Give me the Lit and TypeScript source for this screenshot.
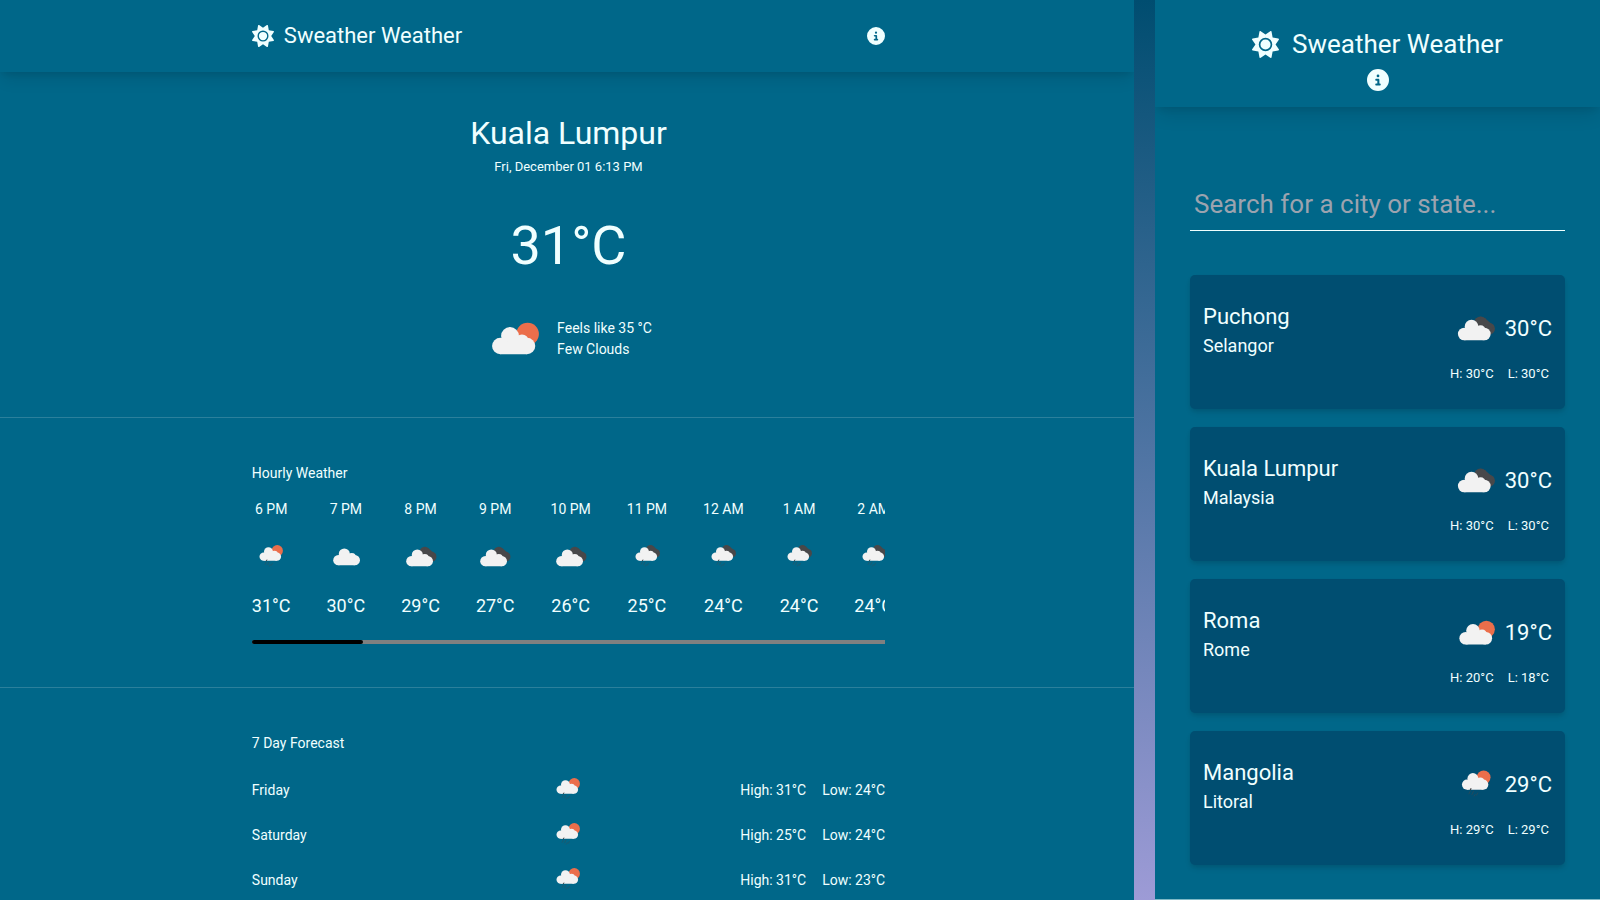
import { LitElement, html, svg, css } from "lit";
import { customElement, property } from "lit/decorators.js";

type Sky = "few" | "cloud" | "broken" | "rain-day" | "rain-night";

interface Hour { time: string; sky: Sky; temp: number }
interface Day { name: string; high: number; low: number }
interface Place { city: string; region: string; sky: Sky; temp: number; high: number; low: number }

const HOURS: Hour[] = [
  { time: "6 PM", sky: "rain-day", temp: 31 },
  { time: "7 PM", sky: "cloud", temp: 30 },
  { time: "8 PM", sky: "broken", temp: 29 },
  { time: "9 PM", sky: "broken", temp: 27 },
  { time: "10 PM", sky: "broken", temp: 26 },
  { time: "11 PM", sky: "rain-night", temp: 25 },
  { time: "12 AM", sky: "rain-night", temp: 24 },
  { time: "1 AM", sky: "rain-night", temp: 24 },
  { time: "2 AM", sky: "rain-night", temp: 24 },
];

const DAYS: Day[] = [
  { name: "Friday", high: 31, low: 24 },
  { name: "Saturday", high: 25, low: 24 },
  { name: "Sunday", high: 31, low: 23 },
];

const PLACES: Place[] = [
  { city: "Puchong", region: "Selangor", sky: "broken", temp: 30, high: 30, low: 30 },
  { city: "Kuala Lumpur", region: "Malaysia", sky: "broken", temp: 30, high: 30, low: 30 },
  { city: "Roma", region: "Rome", sky: "few", temp: 19, high: 20, low: 18 },
  { city: "Mangolia", region: "Litoral", sky: "rain-day", temp: 29, high: 29, low: 29 },
];

const SUN =
  "M361.5 1.2c5 2.1 8.6 6.6 9.6 11.9L391 121l107.9 19.8c5.3 1 9.8 4.6 11.9 9.6s1.5 10.7-1.6 15.2L446.9 256l62.3 90.3c3.1 4.5 3.7 10.2 1.6 15.2s-6.6 8.6-11.9 9.6L391 391 371.1 498.9c-1 5.3-4.6 9.8-9.6 11.9s-10.7 1.5-15.2-1.6L256 446.9l-90.3 62.3c-4.5 3.1-10.2 3.7-15.2 1.6s-8.6-6.6-9.6-11.9L121 391 13.1 371.1c-5.3-1-9.8-4.6-11.9-9.6s-1.5-10.7 1.6-15.2L65.1 256 2.8 165.7c-3.1-4.5-3.7-10.2-1.6-15.2s6.6-8.6 11.9-9.6L121 121 140.9 13.1c1-5.3 4.6-9.8 9.6-11.9s10.7-1.5 15.2 1.6L256 65.1 346.3 2.8c4.5-3.1 10.2-3.7 15.2-1.6zM160 256a96 96 0 1 1 192 0 96 96 0 1 1 -192 0zm224 0a128 128 0 1 0 -256 0 128 128 0 1 0 256 0z";

const INFO =
  "M256 512A256 256 0 1 0 256 0a256 256 0 1 0 0 512zM216 336l24 0 0-64-24 0c-13.3 0-24-10.7-24-24s10.7-24 24-24l48 0c13.3 0 24 10.7 24 24l0 88 8 0c13.3 0 24 10.7 24 24s-10.7 24-24 24l-80 0c-13.3 0-24-10.7-24-24s10.7-24 24-24zm40-208a32 32 0 1 1 0 64 32 32 0 1 1 0-64z";

@customElement("sky-icon")
export class SkyIcon extends LitElement {
  @property() sky: Sky = "cloud";

  static styles = css`
    :host { display: block; flex: none; }
    svg { display: block; width: 100%; height: 100%; }
    .cloud { fill: #f2f2f2; }
    .sun { fill: #eb6e4b; }
    .shade { fill: #48484a; }
    .drops { stroke: #48484a; stroke-width: 4; stroke-linecap: round; opacity: 0.6; }
    .notch { stroke: #48484a; stroke-width: 6; stroke-linecap: round; }
  `;

  private cloud() {
    return svg`<g class="cloud">
      <circle cx="54" cy="27" r="27"/><circle cx="25" cy="57" r="25"/>
      <circle cx="105" cy="57" r="25"/><circle cx="90" cy="42" r="20"/>
      <path d="M25 82 L25 52 L54 40 L90 40 L105 52 L105 82 Z"/>
    </g>`;
  }

  private behind() {
    if (this.sky === "few" || this.sky === "rain-day")
      return svg`<circle class="sun" cx="107" cy="21" r="34"/>`;
    if (this.sky === "broken" || this.sky === "rain-night")
      return svg`<g class="shade"><circle cx="90" cy="12" r="25"/>
        <circle cx="123" cy="36" r="24"/><path d="M90 -13 L108 -6 L144 26 L120 58 L80 30 Z"/></g>`;
    return svg``;
  }

  private place() {
    switch (this.sky) {
      case "cloud": return "translate(5.2 9.4) scale(0.206)";
      case "few": return "translate(4.4 10.6) scale(0.206)";
      case "broken": return "translate(3.2 10.4) scale(0.206)";
      default: return "translate(6.5 8.2) scale(0.166)";
    }
  }

  render() {
    const wet = this.sky === "rain-day" || this.sky === "rain-night";
    return html`<svg viewBox="0 0 36 36" aria-hidden="true">
      ${svg`<g transform=${this.place()}>
        ${this.behind()}${this.cloud()}
        ${wet
          ? svg`<path class="notch" d="M44 77 L42 82"/>
            <path class="drops" d="M40 91 L34 103 M57 90 L49 106 M65 106 L60 114 M78 98 L72 109"/>`
          : svg``}
      </g>`}
    </svg>`;
  }
}

const base = css`
  * { box-sizing: border-box; }
  h1, h2, h3, p, ul { margin: 0; padding: 0; font-weight: 400; }
  ul { list-style: none; }
  a { color: inherit; text-decoration: none; }
  button { padding: 0; border: 0; background: none; color: inherit; cursor: pointer; }
  .glyph { display: block; width: 100%; height: 100%; fill: currentColor; }
`;

@customElement("weather-detail")
export class WeatherDetail extends LitElement {
  static styles = [base, css`
    :host { display: block; min-width: 0; overflow: hidden; background: #006789; }
    .wrap { width: 56%; margin: 0 auto; }
    .bar, .now, .block { padding-left: 3px; }
    .bar {
      position: relative; z-index: 1; background: #006789;
      box-shadow: 0 10px 15px -3px rgba(0, 0, 0, 0.1), 0 4px 6px -2px rgba(0, 0, 0, 0.08);
    }
    .bar .wrap { display: flex; align-items: center; justify-content: space-between; height: 72px; }
    .brand { display: flex; align-items: center; gap: 10px; font-size: 22px; line-height: 28px; }
    .logo { width: 22px; height: 22px; }
    .info { width: 18px; height: 18px; }
    .now {
      display: flex; flex-direction: column; align-items: center;
      padding-top: 41px; padding-bottom: 49px; border-bottom: 1px solid rgba(255, 255, 255, 0.17);
    }
    .city { font-size: 32px; line-height: 40px; }
    .date { margin-top: 4px; font-size: 13px; line-height: 20px; }
    .temp { margin-top: 39px; font-size: 54px; line-height: 60px; }
    .feel { display: flex; align-items: center; gap: 14px; margin-top: 34px; font-size: 14px; line-height: 21px; }
    .feel sky-icon { width: 58px; height: 58px; }
    .block { padding-top: 45px; padding-bottom: 43px; border-bottom: 1px solid rgba(255, 255, 255, 0.17); }
    .block.last { padding-bottom: 0; border-bottom: 0; }
    .label { font-size: 14px; line-height: 20px; }
    .hours { display: flex; gap: 36px; margin-top: 16px; overflow-x: auto; scrollbar-width: none; }
    .hour { display: flex; flex: none; flex-direction: column; align-items: center; gap: 20px; }
    .time { font-size: 14px; line-height: 20px; white-space: nowrap; }
    .degrees { font-size: 18px; line-height: 22px; }
    .hour sky-icon, .days sky-icon { width: 36px; height: 36px; }
    .track { height: 4px; margin-top: 23px; border-radius: 2px 0 0 2px; background: #808080; }
    .thumb { height: 4px; border-radius: 2px; background: #000; }
    .days { width: 100%; margin-top: 14px; border-collapse: collapse; table-layout: fixed; font-size: 14px; line-height: 20px; }
    .days tr { height: 45px; }
    .days th, .days td { padding: 0; vertical-align: middle; }
    .day { font-weight: 400; text-align: left; }
    .days sky-icon { margin: 0 auto; }
    .range { display: flex; justify-content: flex-end; gap: 16px; white-space: nowrap; }
  `];

  render() {
    return html`
      <header class="bar">
        <div class="wrap">
          <a class="brand" href="#">
            <span class="logo"><svg class="glyph" viewBox="0 0 512 512" aria-hidden="true"><path d=${SUN}></path></svg></span>
            <span>Sweather Weather</span>
          </a>
          <button class="info" type="button" aria-label="About">
            <svg class="glyph" viewBox="0 0 512 512" aria-hidden="true"><path fill-rule="evenodd" d=${INFO}></path></svg>
          </button>
        </div>
      </header>
      <section class="now">
        <h1 class="city">Kuala Lumpur</h1>
        <p class="date">Fri, December 01 6:13 PM</p>
        <p class="temp">31°C</p>
        <div class="feel">
          <sky-icon sky="few"></sky-icon>
          <div><p>Feels like 35 °C</p><p>Few Clouds</p></div>
        </div>
      </section>
      <section class="block">
        <div class="wrap">
          <h2 class="label">Hourly Weather</h2>
          <ul class="hours">
            ${HOURS.map((h) => html`<li class="hour">
              <span class="time">${h.time}</span>
              <sky-icon sky=${h.sky}></sky-icon>
              <span class="degrees">${h.temp}°C</span>
            </li>`)}
          </ul>
          <div class="track"><div class="thumb" style="width: 17.6%"></div></div>
        </div>
      </section>
      <section class="block last">
        <div class="wrap">
          <h2 class="label">7 Day Forecast</h2>
          <table class="days">
            <tbody>
              ${DAYS.map((d) => html`<tr>
                <th class="day" scope="row">${d.name}</th>
                <td><sky-icon sky="rain-day"></sky-icon></td>
                <td><div class="range"><span>High: ${d.high}°C</span><span>Low: ${d.low}°C</span></div></td>
              </tr>`)}
            </tbody>
          </table>
        </div>
      </section>
    `;
  }
}

@customElement("weather-places")
export class WeatherPlaces extends LitElement {
  static styles = [base, css`
    :host { display: block; min-width: 0; overflow: hidden; background: #006789; border-bottom: 1px solid #7fb9c6; }
    .bar {
      display: flex; flex-direction: column; align-items: center; gap: 9px; padding: 28px 0 16px;
      position: relative; z-index: 1; background: #006789;
      box-shadow: 0 11px 17px -3px rgba(0, 0, 0, 0.1), 0 4px 7px -2px rgba(0, 0, 0, 0.08);
    }
    .brand { display: flex; align-items: center; gap: 13px; font-size: 26px; line-height: 32px; }
    .logo { width: 27px; height: 27px; }
    .info { width: 22px; height: 22px; }
    .body { padding: 69px 35px 33px; }
    .search {
      display: block; width: 100%; height: 55px; padding: 1px 4px 0; border: 0; border-bottom: 1px solid #f0ffff;
      border-radius: 0; outline: 0; background: transparent; color: inherit; font: inherit; font-size: 26px;
    }
    .search::placeholder { color: #9ca3af; opacity: 1; }
    .list { display: flex; flex-direction: column; gap: 18px; margin-top: 44px; }
    .card {
      display: flex; justify-content: space-between; padding: 27px 13px 25px; border-radius: 5px; background: #004e71;
      box-shadow: 0 4px 6px -1px rgba(0, 0, 0, 0.1), 0 2px 4px -1px rgba(0, 0, 0, 0.08);
    }
    .city { font-size: 22px; line-height: 30px; }
    .region { font-size: 18px; line-height: 27px; }
    .side { display: flex; flex-direction: column; align-items: flex-end; gap: 13px; padding-top: 5px; }
    .temp { display: flex; align-items: center; gap: 7px; font-size: 22px; line-height: 30px; }
    .temp sky-icon { width: 44px; height: 44px; }
    .range { display: flex; gap: 14px; padding-right: 3px; font-size: 13px; line-height: 20px; }
  `];

  render() {
    return html`
      <header class="bar">
        <a class="brand" href="#">
          <span class="logo"><svg class="glyph" viewBox="0 0 512 512" aria-hidden="true"><path d=${SUN}></path></svg></span>
          <span>Sweather Weather</span>
        </a>
        <button class="info" type="button" aria-label="About">
          <svg class="glyph" viewBox="0 0 512 512" aria-hidden="true"><path fill-rule="evenodd" d=${INFO}></path></svg>
        </button>
      </header>
      <div class="body">
        <input class="search" type="text" aria-label="Search for a city or state" placeholder="Search for a city or state..." />
        <ul class="list">
          ${PLACES.map((p) => html`<li><a class="card" href="#">
            <div><h3 class="city">${p.city}</h3><p class="region">${p.region}</p></div>
            <div class="side">
              <div class="temp"><sky-icon sky=${p.sky}></sky-icon><span>${p.temp}°C</span></div>
              <div class="range"><span>H: ${p.high}°C</span><span>L: ${p.low}°C</span></div>
            </div>
          </a></li>`)}
        </ul>
      </div>
    `;
  }
}

@customElement("app-root")
export class AppRoot extends LitElement {
  static styles = css`
    :host {
      display: grid; grid-template-columns: minmax(0, 1134fr) 21px minmax(0, 445fr);
      height: 100vh; overflow: hidden;
      background: linear-gradient(#004d70, #9d9bd6);
      color: #f0ffff; font-family: Roboto, sans-serif;
    }
    weather-detail { grid-column: 1; }
    weather-places { grid-column: 3; }
  `;

  render() {
    return html`<weather-detail></weather-detail><weather-places></weather-places>`;
  }
}
